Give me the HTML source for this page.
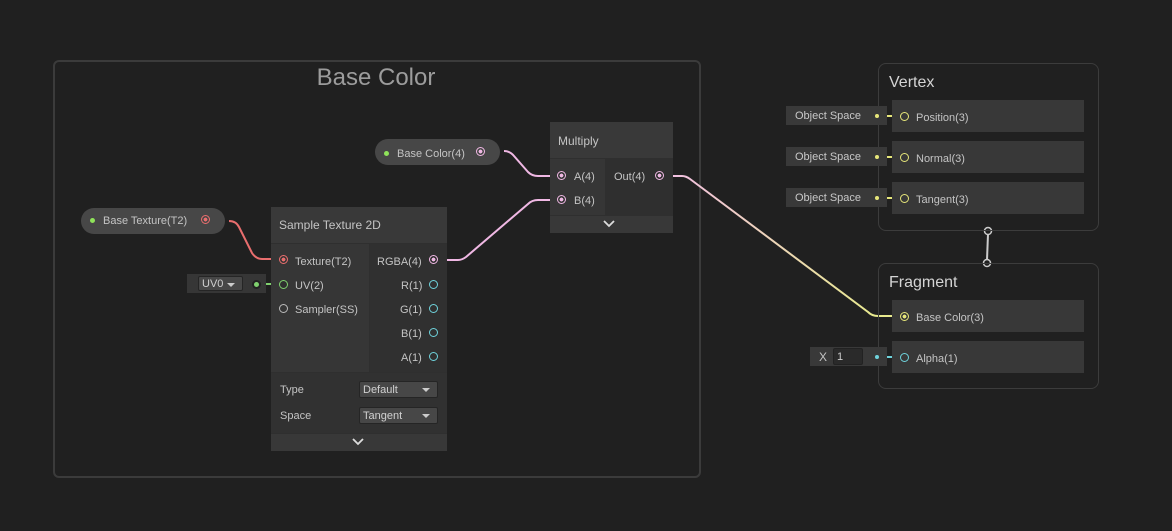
<html><head><style>
body{margin:0;width:1172px;height:531px;background:#202020;position:relative;overflow:hidden;font-family:"Liberation Sans",sans-serif;color:#c4c4c4;font-size:11px}
div{position:absolute;box-sizing:border-box}
.t{white-space:nowrap}
.pill{background:#474747;border-radius:13px;height:26px}
.row{background:#383838}
.os{background:#393939;font-size:11px;color:#c8c8c8;padding:4px 0 0 9px;height:19px}
.dd{background:#474747;border-radius:2px;border:1px solid #252525;color:#d0d0d0;padding:2px 0 0 3px}
.dd:after{content:"";position:absolute;right:7px;top:6px;border:4px solid transparent;border-top:4px solid #ccc}
</style></head><body>
<div style="left:53px;top:60px;width:648px;height:418px;border:2px solid #3b3b3b;border-radius:6px"></div>
<div class="t" style="left:0;width:752px;text-align:center;top:64px;font-size:24px;color:#9c9c9c">Base Color</div>

<svg style="position:absolute;left:0;top:0" width="1172" height="531">
<defs><linearGradient id="g" x1="660" y1="0" x2="876" y2="0" gradientUnits="userSpaceOnUse"><stop offset="0" stop-color="#f2bde6"/><stop offset="1" stop-color="#e8ea8e"/></linearGradient></defs>
<g fill="none" stroke-width="2">
<path d="M229 221 Q236 221 239 227 L252 253 Q256 259 262 259 L283 259" stroke="#e96e6e"/>
<path d="M258 284 L283 284" stroke="#7fd06e"/>
<path d="M504 151 Q510 151 514 156 L528 172 Q532 176 538 176 L562 176" stroke="#f0b8e4"/>
<path d="M447 260 L458 260 Q462 260 466 257 L528 204 Q532 200 538 200 L562 200" stroke="#f0b8e4"/>
<path d="M667 176 L682 176 Q686 176 690 179 L868 312 Q872 316 878 316 L904 316" stroke="url(#g)"/>
<path d="M877 116 L904 116 M877 157 L904 157 M877 198 L904 198" stroke="#e6e67a"/>
<path d="M877 357 L904 357" stroke="#6fd3dc"/>
<path d="M988 234 L987 260" stroke="#ccc"/>
<path d="M353 439 L358 444 L363 439 M604 220 L609 225 L614 220" stroke="#ddd" stroke-width="1.8"/>
</g>
<g fill="none" stroke-width="1.5">
<circle cx="988" cy="231" r="3.5" stroke="#ccc" fill="#202020"/><circle cx="987" cy="263" r="3.5" stroke="#ccc" fill="#202020"/>
</g>
</svg>

<div class="pill" style="left:81px;top:208px;width:144px"></div>
<div style="left:90px;top:218px;width:5px;height:5px;border-radius:50%;background:#8fe35a"></div>
<div class="t" style="left:103px;top:215px">Base Texture(T2)</div>
<div style="left:201px;top:215px;width:9px;height:9px;border-radius:50%;border:1.5px solid #e96e6e;background:radial-gradient(#e96e6e 35%,transparent 40%)"></div>
<div class="pill" style="left:375px;top:139px;width:125px"></div>
<div style="left:384px;top:151px;width:5px;height:5px;border-radius:50%;background:#8fe35a"></div>
<div class="t" style="left:397px;top:148px">Base Color(4)</div>
<div style="left:476px;top:147px;width:9px;height:9px;border-radius:50%;border:1.5px solid #f0b8e4;background:radial-gradient(#f0b8e4 35%,transparent 40%)"></div>

<div style="left:187px;top:274px;width:79px;height:19px;background:#363636"></div>
<div class="dd" style="left:198px;top:276px;width:45px;height:15px;padding-top:1px">UV0</div>
<div style="left:254px;top:282px;width:5px;height:5px;border-radius:50%;background:#7fd06e;box-shadow:0 0 0 2px #222"></div>

<div style="left:271px;top:207px;width:176px;height:244px;background:#2f2f2f"></div>
<div style="left:271px;top:207px;width:176px;height:36px;background:#393939"></div>
<div class="t" style="left:279px;top:218px;font-size:12px">Sample Texture 2D</div>
<div style="left:271px;top:244px;width:98px;height:128px;background:#363636"></div>
<div style="left:370px;top:244px;width:77px;height:128px;background:#303030"></div>
<div style="left:271px;top:373px;width:176px;height:60px;background:#313131"></div>
<div style="left:271px;top:434px;width:176px;height:17px;background:#383838"></div>
<div style="left:279px;top:255px;width:9px;height:9px;border-radius:50%;border:1.5px solid #e96e6e;background:radial-gradient(#e96e6e 35%,transparent 40%)"></div>
<div class="t" style="left:295px;top:256px">Texture(T2)</div>
<div style="left:279px;top:280px;width:9px;height:9px;border-radius:50%;border:1.5px solid #7fd06e;background:#2f2f2f"></div>
<div class="t" style="left:295px;top:280px">UV(2)</div>
<div style="left:279px;top:304px;width:9px;height:9px;border-radius:50%;border:1.5px solid #bbb"></div>
<div class="t" style="left:295px;top:304px">Sampler(SS)</div>
<div class="t" style="left:377px;top:256px">RGBA(4)</div>
<div style="left:429px;top:255px;width:9px;height:9px;border-radius:50%;border:1.5px solid #f0b8e4;background:radial-gradient(#f0b8e4 35%,transparent 40%)"></div>
<div class="t" style="left:401px;top:280px">R(1)</div>
<div class="t" style="left:400px;top:304px">G(1)</div>
<div class="t" style="left:401px;top:328px">B(1)</div>
<div class="t" style="left:401px;top:352px">A(1)</div>
<div style="left:429px;top:280px;width:9px;height:9px;border-radius:50%;border:1.5px solid #6fd3dc"></div>
<div style="left:429px;top:304px;width:9px;height:9px;border-radius:50%;border:1.5px solid #6fd3dc"></div>
<div style="left:429px;top:328px;width:9px;height:9px;border-radius:50%;border:1.5px solid #6fd3dc"></div>
<div style="left:429px;top:352px;width:9px;height:9px;border-radius:50%;border:1.5px solid #6fd3dc"></div>
<div class="t" style="left:280px;top:384px">Type</div>
<div class="t" style="left:280px;top:410px">Space</div>
<div class="dd" style="left:359px;top:381px;width:79px;height:17px">Default</div>
<div class="dd" style="left:359px;top:407px;width:79px;height:17px">Tangent</div>

<div style="left:550px;top:122px;width:123px;height:111px;background:#2f2f2f"></div>
<div style="left:550px;top:122px;width:123px;height:36px;background:#393939"></div>
<div class="t" style="left:558px;top:134px;font-size:12px">Multiply</div>
<div style="left:550px;top:159px;width:55px;height:56px;background:#363636"></div>
<div style="left:550px;top:216px;width:123px;height:17px;background:#383838"></div>
<svg style="position:absolute;left:600px;top:216px" width="20" height="17"><path d="M4 5 L9 10 L14 5" fill="none" stroke="#ddd" stroke-width="1.8"/></svg>
<svg style="position:absolute;left:349px;top:434px" width="20" height="17"><path d="M4 5 L9 10 L14 5" fill="none" stroke="#ddd" stroke-width="1.8"/></svg>
<div style="left:557px;top:171px;width:9px;height:9px;border-radius:50%;border:1.5px solid #f0b8e4;background:radial-gradient(#f0b8e4 35%,transparent 40%)"></div>
<div style="left:557px;top:195px;width:9px;height:9px;border-radius:50%;border:1.5px solid #f0b8e4;background:radial-gradient(#f0b8e4 35%,transparent 40%)"></div>
<div class="t" style="left:574px;top:171px">A(4)</div>
<div class="t" style="left:574px;top:195px">B(4)</div>
<div class="t" style="left:614px;top:171px">Out(4)</div>
<div style="left:655px;top:171px;width:9px;height:9px;border-radius:50%;border:1.5px solid #f0b8e4;background:radial-gradient(#f0b8e4 35%,transparent 40%)"></div>

<div style="left:878px;top:63px;width:221px;height:168px;border:1px solid #3c3c3c;border-radius:8px"></div>
<div class="t" style="left:889px;top:74px;font-size:16px;color:#d4d4d4">Vertex</div>
<div class="row" style="left:892px;top:100px;width:192px;height:32px"></div>
<div class="row" style="left:892px;top:141px;width:192px;height:32px"></div>
<div class="row" style="left:892px;top:182px;width:192px;height:32px"></div>
<div class="os" style="left:786px;top:106px;width:101px">Object Space</div>
<div class="os" style="left:786px;top:147px;width:101px">Object Space</div>
<div class="os" style="left:786px;top:188px;width:101px">Object Space</div>
<div class="t" style="left:916px;top:112px">Position(3)</div>
<div class="t" style="left:916px;top:153px">Normal(3)</div>
<div class="t" style="left:916px;top:194px">Tangent(3)</div>
<div style="left:900px;top:112px;width:9px;height:9px;border-radius:50%;border:1.5px solid #e6e67a;background:#383838"></div>
<div style="left:900px;top:153px;width:9px;height:9px;border-radius:50%;border:1.5px solid #e6e67a;background:#383838"></div>
<div style="left:900px;top:194px;width:9px;height:9px;border-radius:50%;border:1.5px solid #e6e67a;background:#383838"></div>
<div style="left:875px;top:114px;width:4px;height:4px;border-radius:50%;background:#e6e67a"></div>
<div style="left:875px;top:155px;width:4px;height:4px;border-radius:50%;background:#e6e67a"></div>
<div style="left:875px;top:196px;width:4px;height:4px;border-radius:50%;background:#e6e67a"></div>

<div style="left:878px;top:263px;width:221px;height:126px;border:1px solid #3c3c3c;border-radius:8px"></div>
<div class="t" style="left:889px;top:274px;font-size:16px;color:#d4d4d4">Fragment</div>
<div class="row" style="left:892px;top:300px;width:192px;height:32px"></div>
<div class="row" style="left:892px;top:341px;width:192px;height:32px"></div>
<div class="t" style="left:916px;top:312px">Base Color(3)</div>
<div class="t" style="left:916px;top:353px">Alpha(1)</div>
<div style="left:900px;top:312px;width:9px;height:9px;border-radius:50%;border:1.5px solid #e6e67a;background:radial-gradient(#e6e67a 35%,#383838 40%)"></div>
<div style="left:900px;top:353px;width:9px;height:9px;border-radius:50%;border:1.5px solid #6fd3dc;background:#383838"></div>
<div style="left:810px;top:347px;width:77px;height:19px;background:#393939"></div>
<div class="t" style="left:819px;top:350px;font-size:12px">X</div>
<div style="left:833px;top:348px;width:30px;height:17px;background:#2a2a2a;border:1px solid #222;border-radius:2px;padding:2px 0 0 3px;color:#ccc">1</div>
<div style="left:875px;top:355px;width:4px;height:4px;border-radius:50%;background:#6fd3dc"></div>
</body></html>
